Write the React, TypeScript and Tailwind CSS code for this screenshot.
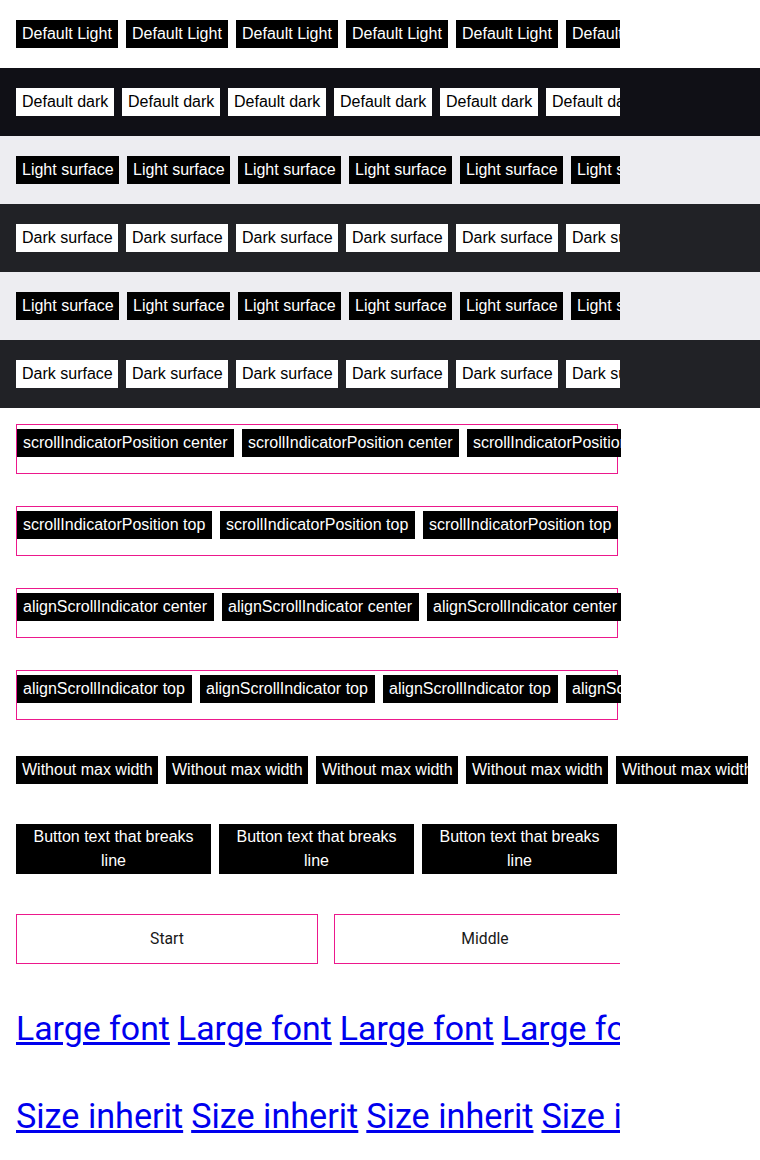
import React from "react";

const SANS = "font-['Liberation_Sans',Arial,sans-serif]";

const WIDTHS: Record<string, string> = {
  "Default Light": "w-[102px]",
  "Default dark": "w-[98px]",
  "Light surface": "w-[103px]",
  "Dark surface": "w-[102px]",
  "scrollIndicatorPosition center": "w-[217px]",
  "scrollIndicatorPosition top": "w-[195px]",
  "alignScrollIndicator center": "w-[197px]",
  "alignScrollIndicator top": "w-[175px]",
  "Without max width": "w-[142px]",
};

function Btn({ label, dark }: { label: string; dark?: boolean }) {
  return (
    <span
      className={`${WIDTHS[label] ?? ""} shrink-0 overflow-hidden whitespace-nowrap px-1.5 py-1 text-base leading-5 ${
        dark ? "bg-white text-black" : "bg-black text-white"
      }`}
    >
      {label}
    </span>
  );
}

function Band({ bg, label, dark }: { bg: string; label: string; dark?: boolean }) {
  return (
    <div className={`${bg} h-[68px] px-4 pt-5`}>
      <div className="flex w-[604px] gap-2 overflow-hidden">
        {Array.from({ length: 6 }).map((_, i) => (
          <Btn key={i} label={label} dark={dark} />
        ))}
      </div>
    </div>
  );
}

function ScrollBox({ label }: { label: string }) {
  return (
    <div className="relative h-[50px] w-[605px] overflow-hidden">
      <div className="absolute left-0 top-0 h-[50px] w-[602px] border border-[#ec188c]" />
      <div className="relative flex gap-2 pl-px pt-[5px]">
        {Array.from({ length: 4 }).map((_, i) => (
          <Btn key={i} label={label} />
        ))}
      </div>
    </div>
  );
}

export default function App() {
  return (
    <div className={`${SANS} min-h-[1160px] w-[760px] bg-white text-black`}>
      <Band bg="bg-white" label="Default Light" />
      <Band bg="bg-[#101016]" label="Default dark" dark />
      <Band bg="bg-[#ededf1]" label="Light surface" />
      <Band bg="bg-[#212226]" label="Dark surface" dark />
      <Band bg="bg-[#ededf1]" label="Light surface" />
      <Band bg="bg-[#212226]" label="Dark surface" dark />

      <div className="px-4 pt-4">
        <div className="flex flex-col gap-8">
          <ScrollBox label="scrollIndicatorPosition center" />
          <ScrollBox label="scrollIndicatorPosition top" />
          <ScrollBox label="alignScrollIndicator center" />
          <ScrollBox label="alignScrollIndicator top" />
        </div>

        <div className="mt-9 flex w-[732px] gap-2 overflow-hidden">
          {Array.from({ length: 5 }).map((_, i) => (
            <Btn key={i} label="Without max width" />
          ))}
        </div>

        <div className="mt-10 flex w-[604px] gap-2 overflow-hidden">
          {Array.from({ length: 3 }).map((_, i) => (
            <span
              key={i}
              className="w-[195px] shrink-0 bg-black px-1.5 py-px text-center text-base leading-6 text-white"
            >
              Button text that breaks line
            </span>
          ))}
        </div>

        <div className="mt-10 flex w-[604px] gap-4 overflow-hidden font-['Roboto',sans-serif]">
          {["Start", "Middle", "End"].map((t) => (
            <div
              key={t}
              className="flex h-[50px] w-[302px] shrink-0 items-center justify-center border border-[#ec188c] text-[15.7px] text-[#191919]"
            >
              {t}
            </div>
          ))}
        </div>

        <div className="mt-[45px] flex w-[604px] gap-2 overflow-hidden whitespace-nowrap font-['Roboto',sans-serif] text-[33.85px] leading-[40px]">
          {Array.from({ length: 5 }).map((_, i) => (
            <a key={i} href="#" className="shrink-0 text-[#0000ee] underline">
              Large font
            </a>
          ))}
        </div>

        <div className="mt-[47px] flex w-[604px] gap-2 overflow-hidden whitespace-nowrap font-['Roboto',sans-serif] text-[34.2px] leading-[40px]">
          {Array.from({ length: 5 }).map((_, i) => (
            <a key={i} href="#" className="shrink-0 text-[#0000ee] underline">
              Size inherit
            </a>
          ))}
        </div>
      </div>
    </div>
  );
}
